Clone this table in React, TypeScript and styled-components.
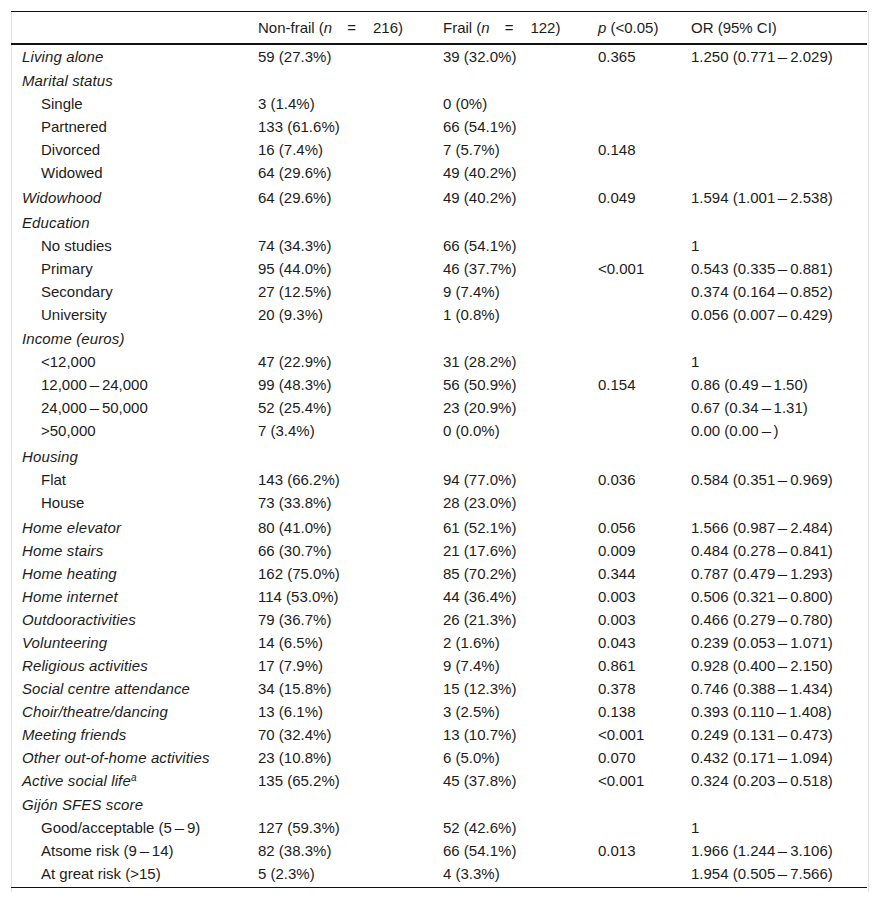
import styled, { createGlobalStyle } from "styled-components"

const GlobalStyle = createGlobalStyle`
  body {
    margin: 0;
    background: #fff;
    font-family: "Liberation Sans", Arial, sans-serif;
    color: #1c1c1c;
  }
`

const Frame = styled.div`
  margin: 11px 11px 11px 11px;
  width: 856px;
  border-left: 1px solid #e4e4e4;
  border-right: 1px solid #e4e4e4;
  padding-bottom: 4px;
`

const Table = styled.table`
  width: 856px;
  margin-left: -1px;
  border-collapse: collapse;
  table-layout: fixed;
  font-size: 15px;
  line-height: 17px;
  border-top: 1px solid #111;
  border-bottom: 1px solid #111;
`

const HeadRow = styled.tr`
  height: 32px;
  border-bottom: 2px solid #111;
`

const Th = styled.th`
  text-align: left;
  font-weight: normal;
  padding: 0 0 0 11px;
  white-space: nowrap;
`

const Row = styled.tr<{ $extra?: number; $tail?: boolean }>`
  td {
    height: 23px;
    padding-top: ${(p) => p.$extra ?? 0}px;
    padding-bottom: ${(p) => (p.$tail ? 2 : 0)}px;
    box-sizing: content-box;
  }
`

const Td = styled.td`
  padding: 0 0 0 11px;
  white-space: nowrap;
  vertical-align: middle;
`

const Label = styled(Td)<{ $sub?: boolean }>`
  padding-left: ${(p) => (p.$sub ? 30 : 11)}px;
  font-style: ${(p) => (p.$sub ? "normal" : "italic")};
  letter-spacing: ${(p) => (p.$sub ? 0 : 0.12)}px;
`

const Eq = styled.span`
  padding: 0 17px 0 15px;
`

const Dash = styled.span`
  display: inline-block;
  width: 15px;
  text-align: center;
  transform: scaleX(1.12);
`

const Sup = styled.sup`
  font-size: 10px;
  line-height: 0;
  vertical-align: 5px;
`

type Line = {
  label: string
  sub?: boolean
  extra?: number
  sup?: string
  cells?: [string, string, string, string]
}

const rows: Line[] = [
  { label: "Living alone", cells: ["59 (27.3%)", "39 (32.0%)", "0.365", "1.250 (0.771–2.029)"] },
  { label: "Marital status", extra: 1 },
  { label: "Single", sub: true, cells: ["3 (1.4%)", "0 (0%)", "", ""] },
  { label: "Partnered", sub: true, cells: ["133 (61.6%)", "66 (54.1%)", "", ""] },
  { label: "Divorced", sub: true, cells: ["16 (7.4%)", "7 (5.7%)", "0.148", ""] },
  { label: "Widowed", sub: true, cells: ["64 (29.6%)", "49 (40.2%)", "", ""] },
  { label: "Widowhood", extra: 2, cells: ["64 (29.6%)", "49 (40.2%)", "0.049", "1.594 (1.001–2.538)"] },
  { label: "Education", extra: 2 },
  { label: "No studies", sub: true, cells: ["74 (34.3%)", "66 (54.1%)", "", "1"] },
  { label: "Primary", sub: true, cells: ["95 (44.0%)", "46 (37.7%)", "<0.001", "0.543 (0.335–0.881)"] },
  { label: "Secondary", sub: true, cells: ["27 (12.5%)", "9 (7.4%)", "", "0.374 (0.164–0.852)"] },
  { label: "University", sub: true, cells: ["20 (9.3%)", "1 (0.8%)", "", "0.056 (0.007–0.429)"] },
  { label: "Income (euros)", extra: 1 },
  { label: "<12,000", sub: true, cells: ["47 (22.9%)", "31 (28.2%)", "", "1"] },
  { label: "12,000–24,000", sub: true, cells: ["99 (48.3%)", "56 (50.9%)", "0.154", "0.86 (0.49–1.50)"] },
  { label: "24,000–50,000", sub: true, cells: ["52 (25.4%)", "23 (20.9%)", "", "0.67 (0.34–1.31)"] },
  { label: ">50,000", sub: true, cells: ["7 (3.4%)", "0 (0.0%)", "", "0.00 (0.00–)"] },
  { label: "Housing", extra: 3 },
  { label: "Flat", sub: true, cells: ["143 (66.2%)", "94 (77.0%)", "0.036", "0.584 (0.351–0.969)"] },
  { label: "House", sub: true, cells: ["73 (33.8%)", "28 (23.0%)", "", ""] },
  { label: "Home elevator", extra: 2, cells: ["80 (41.0%)", "61 (52.1%)", "0.056", "1.566 (0.987–2.484)"] },
  { label: "Home stairs", cells: ["66 (30.7%)", "21 (17.6%)", "0.009", "0.484 (0.278–0.841)"] },
  { label: "Home heating", cells: ["162 (75.0%)", "85 (70.2%)", "0.344", "0.787 (0.479–1.293)"] },
  { label: "Home internet", cells: ["114 (53.0%)", "44 (36.4%)", "0.003", "0.506 (0.321–0.800)"] },
  { label: "Outdooractivities", cells: ["79 (36.7%)", "26 (21.3%)", "0.003", "0.466 (0.279–0.780)"] },
  { label: "Volunteering", cells: ["14 (6.5%)", "2 (1.6%)", "0.043", "0.239 (0.053–1.071)"] },
  { label: "Religious activities", cells: ["17 (7.9%)", "9 (7.4%)", "0.861", "0.928 (0.400–2.150)"] },
  { label: "Social centre attendance", cells: ["34 (15.8%)", "15 (12.3%)", "0.378", "0.746 (0.388–1.434)"] },
  { label: "Choir/theatre/dancing", cells: ["13 (6.1%)", "3 (2.5%)", "0.138", "0.393 (0.110–1.408)"] },
  { label: "Meeting friends", cells: ["70 (32.4%)", "13 (10.7%)", "<0.001", "0.249 (0.131–0.473)"] },
  { label: "Other out-of-home activities", cells: ["23 (10.8%)", "6 (5.0%)", "0.070", "0.432 (0.171–1.094)"] },
  { label: "Active social life", sup: "a", cells: ["135 (65.2%)", "45 (37.8%)", "<0.001", "0.324 (0.203–0.518)"] },
  { label: "Gijón SFES score", extra: 1 },
  { label: "Good/acceptable (5–9)", sub: true, cells: ["127 (59.3%)", "52 (42.6%)", "", "1"] },
  { label: "Atsome risk (9–14)", sub: true, cells: ["82 (38.3%)", "66 (54.1%)", "0.013", "1.966 (1.244–3.106)"] },
  { label: "At great risk (>15)", sub: true, cells: ["5 (2.3%)", "4 (3.3%)", "", "1.954 (0.505–7.566)"] },
]

// en dashes in the source are set wider than the font's own glyph
function withDashes(text: string) {
  const parts = text.split("–")
  return parts.map((p, i) => (
    <span key={i}>
      {i > 0 && <Dash>–</Dash>}
      {p}
    </span>
  ))
}

export default function App() {
  return (
    <>
      <GlobalStyle />
      <Frame>
        <Table>
          <colgroup>
            <col style={{ width: 236 }} />
            <col style={{ width: 185 }} />
            <col style={{ width: 155 }} />
            <col style={{ width: 93 }} />
            <col style={{ width: 187 }} />
          </colgroup>
          <thead>
            <HeadRow>
              <Th />
              <Th>
                Non-frail (<i>n</i>
                <Eq>=</Eq>216)
              </Th>
              <Th>
                Frail (<i>n</i>
                <Eq>=</Eq>122)
              </Th>
              <Th>
                <i>p</i> (&lt;0.05)
              </Th>
              <Th>OR (95% CI)</Th>
            </HeadRow>
          </thead>
          <tbody>
            {rows.map((r, idx) => (
              <Row key={r.label} $extra={r.extra} $tail={idx === rows.length - 1}>
                <Label $sub={r.sub}>
                  {withDashes(r.label)}
                  {r.sup && <Sup>{r.sup}</Sup>}
                </Label>
                {(r.cells ?? ["", "", "", ""]).map((c, i) => (
                  <Td key={i}>{withDashes(c)}</Td>
                ))}
              </Row>
            ))}
          </tbody>
        </Table>
      </Frame>
    </>
  )
}
